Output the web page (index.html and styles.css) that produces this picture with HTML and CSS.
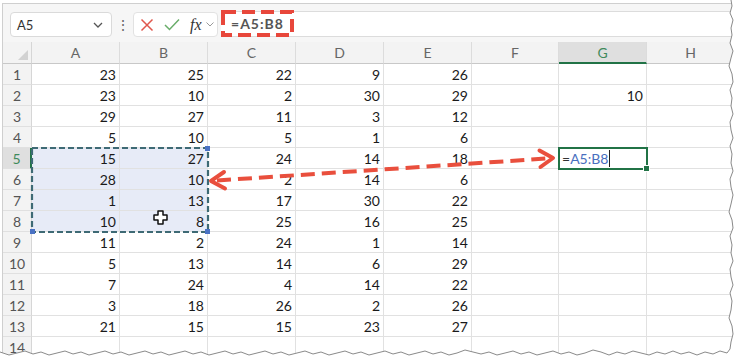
FILE: index.html
```html
<!DOCTYPE html>
<html lang="en">
<head>
    <meta charset="UTF-8">
    <title>Range reference</title>
    <link rel="stylesheet" href="styles.css">
</head>
<body>
<div class="screen">
    <div class="window">

        <!-- Formula bar -->
        <div class="toolbar">
            <div class="namebox">
                <span>A5</span>
                <svg width="10" height="6" viewBox="0 0 10 6"><path d="M1 1 L5 5 L9 1" fill="none" stroke="#555" stroke-width="1.3"/></svg>
            </div>
            <span class="dots">⋮</span>
            <div class="fxbox">
                <svg width="14" height="14" viewBox="0 0 14 14"><path d="M1.5 1.5 L12.5 12.5 M12.5 1.5 L1.5 12.5" stroke="#e0574d" stroke-width="1.5"/></svg>
                <svg width="16" height="13" viewBox="0 0 16 13"><path d="M1 7 L5.5 11.5 L15 1.5" fill="none" stroke="#69ad6a" stroke-width="1.5"/></svg>
                <span class="fx">fx</span>
                <svg width="8" height="5" viewBox="0 0 8 5"><path d="M0.5 0.5 L4 4 L7.5 0.5" fill="none" stroke="#999" stroke-width="1"/></svg>
            </div>
            <div class="formula">
                <span class="formula-ref">
                    <svg class="ref-box" width="73" height="27" viewBox="0 0 73 27"><rect x="2" y="2" width="69" height="23" fill="none" stroke="#e8473b" stroke-width="4" stroke-dasharray="13 6"/></svg>
                    =A5:B8
                </span>
            </div>
        </div>

        <!-- Worksheet -->
        <div class="sheet">
            <div class="row head">
                <div class="corner"></div>
                <div class="ch">A</div><div class="ch">B</div><div class="ch">C</div><div class="ch">D</div>
                <div class="ch">E</div><div class="ch narrow">F</div><div class="ch on">G</div><div class="ch">H</div>
            </div>
            <div class="row"><div class="rh">1</div><div class="cell">23</div><div class="cell">25</div><div class="cell">22</div><div class="cell">9</div><div class="cell">26</div><div class="cell narrow"></div><div class="cell"></div><div class="cell"></div></div>
            <div class="row"><div class="rh">2</div><div class="cell">23</div><div class="cell">10</div><div class="cell">2</div><div class="cell">30</div><div class="cell">29</div><div class="cell narrow"></div><div class="cell">10</div><div class="cell"></div></div>
            <div class="row"><div class="rh">3</div><div class="cell">29</div><div class="cell">27</div><div class="cell">11</div><div class="cell">3</div><div class="cell">12</div><div class="cell narrow"></div><div class="cell"></div><div class="cell"></div></div>
            <div class="row"><div class="rh">4</div><div class="cell">5</div><div class="cell">10</div><div class="cell">5</div><div class="cell">1</div><div class="cell">6</div><div class="cell narrow"></div><div class="cell"></div><div class="cell"></div></div>
            <div class="row"><div class="rh on">5</div><div class="cell sel">15</div><div class="cell sel">27</div><div class="cell">24</div><div class="cell">14</div><div class="cell">18</div><div class="cell narrow"></div><div class="cell"></div><div class="cell"></div></div>
            <div class="row"><div class="rh">6</div><div class="cell sel">28</div><div class="cell sel">10</div><div class="cell">2</div><div class="cell">14</div><div class="cell">6</div><div class="cell narrow"></div><div class="cell"></div><div class="cell"></div></div>
            <div class="row"><div class="rh">7</div><div class="cell sel">1</div><div class="cell sel">13</div><div class="cell">17</div><div class="cell">30</div><div class="cell">22</div><div class="cell narrow"></div><div class="cell"></div><div class="cell"></div></div>
            <div class="row"><div class="rh">8</div><div class="cell sel">10</div><div class="cell sel">8</div><div class="cell">25</div><div class="cell">16</div><div class="cell">25</div><div class="cell narrow"></div><div class="cell"></div><div class="cell"></div></div>
            <div class="row"><div class="rh">9</div><div class="cell">11</div><div class="cell">2</div><div class="cell">24</div><div class="cell">1</div><div class="cell">14</div><div class="cell narrow"></div><div class="cell"></div><div class="cell"></div></div>
            <div class="row"><div class="rh">10</div><div class="cell">5</div><div class="cell">13</div><div class="cell">14</div><div class="cell">6</div><div class="cell">29</div><div class="cell narrow"></div><div class="cell"></div><div class="cell"></div></div>
            <div class="row"><div class="rh">11</div><div class="cell">7</div><div class="cell">24</div><div class="cell">4</div><div class="cell">14</div><div class="cell">22</div><div class="cell narrow"></div><div class="cell"></div><div class="cell"></div></div>
            <div class="row"><div class="rh">12</div><div class="cell">3</div><div class="cell">18</div><div class="cell">26</div><div class="cell">2</div><div class="cell">26</div><div class="cell narrow"></div><div class="cell"></div><div class="cell"></div></div>
            <div class="row"><div class="rh">13</div><div class="cell">21</div><div class="cell">15</div><div class="cell">15</div><div class="cell">23</div><div class="cell">27</div><div class="cell narrow"></div><div class="cell"></div><div class="cell"></div></div>
            <div class="row"><div class="rh">14</div><div class="cell"></div><div class="cell"></div><div class="cell"></div><div class="cell"></div><div class="cell"></div><div class="cell narrow"></div><div class="cell"></div><div class="cell"></div></div>
        </div>
    </div>

    <!-- Copied range A5:B8 (marching ants) -->
    <svg class="selection" width="181" height="89" viewBox="0 0 181 89">
        <rect x="2" y="2" width="176" height="84" fill="none" stroke="#3e6a75" stroke-width="2.2" stroke-dasharray="6 3"/>
        <rect x="175" y="0" width="5" height="5" fill="#4a72c4"/>
        <rect x="0" y="83" width="5" height="5" fill="#4a72c4"/>
        <rect x="175" y="83" width="5" height="5" fill="#4a72c4"/>
    </svg>

    <!-- Mouse cursor -->
    <svg class="cursor" width="15" height="15" viewBox="0 0 15 15">
        <path d="M5 1 H10 V5 H14 V10 H10 V14 H5 V10 H1 V5 H5 Z" fill="#fff" stroke="#111" stroke-width="1.5" stroke-linejoin="round"/>
    </svg>

    <!-- Active cell G5 -->
    <div class="active"><span class="eq">=</span>A5:B8<span class="caret"></span></div>

    <!-- Red dashed double arrow -->
    <svg class="arrow" width="739" height="364" viewBox="0 0 739 364">
        <line x1="217" y1="180.5" x2="547" y2="158.5" stroke="#e94f3d" stroke-width="4" stroke-dasharray="14 7"/>
        <polyline points="224,172 211,180.9 225,188.5" fill="none" stroke="#e94f3d" stroke-width="4" stroke-linecap="round" stroke-linejoin="round"/>
        <polyline points="539.5,150.5 553,158 540.5,167" fill="none" stroke="#e94f3d" stroke-width="4" stroke-linecap="round" stroke-linejoin="round"/>
    </svg>

    <!-- Torn paper edge -->
    <svg class="torn" width="739" height="364" viewBox="0 0 739 364">
        <path d="M739 0 L731 0 L732 6 L730 13 L733 20 L731 28 L732 35 L730 43 L733 51 L731 58 L729 66 L732 74 L733 82 L730 90 L732 98 L731 106 L733 114 L730 122 L731 130 L733 138 L730 146 L732 154 L731 163 L733 171 L730 179 L731 187 L733 195 L731 204 L729 212 L732 220 L733 228 L730 236 L732 245 L731 253 L733 261 L730 269 L731 277 L733 285 L730 293 L732 301 L731 310 L729 318 L732 326 L733 334 L731 342 L730 349 L727 353 L720 351 L713 354 L705 352 L697 355 L689 352 L681 354 L673 351 L665 354 L657 352 L649 355 L641 353 L633 351 L625 354 L617 352 L609 355 L601 352 L593 350 L585 353 L577 355 L569 352 L561 354 L553 351 L545 353 L537 355 L529 352 L521 354 L513 351 L505 353 L497 355 L489 352 L481 354 L473 352 L465 350 L457 353 L449 355 L441 352 L433 354 L425 351 L417 353 L409 355 L401 352 L393 354 L385 351 L377 353 L369 355 L361 352 L353 354 L345 351 L337 353 L329 355 L321 352 L313 354 L305 351 L297 353 L289 355 L281 352 L273 354 L265 351 L257 353 L249 355 L241 352 L233 354 L225 351 L217 353 L209 355 L201 352 L193 354 L185 351 L177 353 L169 355 L161 352 L153 354 L145 351 L137 353 L129 355 L121 352 L113 354 L105 351 L97 353 L89 355 L81 352 L73 354 L65 351 L57 353 L49 355 L41 352 L33 354 L25 351 L17 353 L9 355 L0 352 L0 364 L739 364 Z" fill="#fff"/>
        <path d="M731 0 L732 6 L730 13 L733 20 L731 28 L732 35 L730 43 L733 51 L731 58 L729 66 L732 74 L733 82 L730 90 L732 98 L731 106 L733 114 L730 122 L731 130 L733 138 L730 146 L732 154 L731 163 L733 171 L730 179 L731 187 L733 195 L731 204 L729 212 L732 220 L733 228 L730 236 L732 245 L731 253 L733 261 L730 269 L731 277 L733 285 L730 293 L732 301 L731 310 L729 318 L732 326 L733 334 L731 342 L730 349 L727 353 L720 351 L713 354 L705 352 L697 355 L689 352 L681 354 L673 351 L665 354 L657 352 L649 355 L641 353 L633 351 L625 354 L617 352 L609 355 L601 352 L593 350 L585 353 L577 355 L569 352 L561 354 L553 351 L545 353 L537 355 L529 352 L521 354 L513 351 L505 353 L497 355 L489 352 L481 354 L473 352 L465 350 L457 353 L449 355 L441 352 L433 354 L425 351 L417 353 L409 355 L401 352 L393 354 L385 351 L377 353 L369 355 L361 352 L353 354 L345 351 L337 353 L329 355 L321 352 L313 354 L305 351 L297 353 L289 355 L281 352 L273 354 L265 351 L257 353 L249 355 L241 352 L233 354 L225 351 L217 353 L209 355 L201 352 L193 354 L185 351 L177 353 L169 355 L161 352 L153 354 L145 351 L137 353 L129 355 L121 352 L113 354 L105 351 L97 353 L89 355 L81 352 L73 354 L65 351 L57 353 L49 355 L41 352 L33 354 L25 351 L17 353 L9 355 L0 352" fill="none" stroke="#8a8a8a" stroke-width="1"/>
    </svg>
</div>
</body>
</html>
```

FILE: styles.css
```css
/* Excel screenshot with torn edges */
body {
    margin: 0;
    background: #fff;
}

.screen {
    position: relative;
    width: 739px;
    height: 364px;
    overflow: hidden;
    background: #fff;
    font-family: Lato, "Liberation Sans", sans-serif;
}

.window {
    margin: 3px 0 0 2px;
    width: 740px;
    border-top: 1px solid #cfcfcf;
    border-left: 1px solid #cfcfcf;
    background: #f6f6f6;
}

/* Formula bar */
.toolbar {
    display: flex;
    align-items: flex-start;
    height: 38px;
    padding: 8px 0 0 7px;
    box-sizing: border-box;
}

.namebox {
    width: 102px;
    height: 25px;
    box-sizing: border-box;
    display: flex;
    align-items: center;
    justify-content: space-between;
    padding: 0 8px 0 6px;
    background: #fff;
    border: 1px solid #dadada;
    border-radius: 4px;
    font-size: 13px;
    color: #333;
}

.dots {
    width: 21px;
    text-align: center;
    font-size: 14px;
    line-height: 25px;
    color: #666;
}

.fxbox {
    width: 85px;
    height: 25px;
    box-sizing: border-box;
    display: flex;
    align-items: center;
    gap: 10px;
    padding-left: 6px;
    margin-right: 3px;
    background: #fff;
    border: 1px solid #e2e2e2;
    border-radius: 4px;
}

.fx {
    font-family: "Liberation Serif", serif;
    font-style: italic;
    font-size: 16px;
    color: #333;
    margin-right: -6px;
}

.formula {
    flex: 1;
    height: 26px;
    margin-top: -1px;
    box-sizing: border-box;
    background: #fff;
    border-top: 1px solid #dcdcdc;
    border-bottom: 1px solid #dcdcdc;
}

.formula-ref {
    position: relative;
    display: inline-block;
    width: 73px;
    height: 27px;
    margin-top: -2px;
    text-align: center;
    font-size: 14px;
    font-weight: 700;
    line-height: 27px;
    letter-spacing: 1px;
    color: #555;
}

.ref-box {
    position: absolute;
    left: 0;
    top: 0;
}

/* Grid */
.row {
    display: flex;
    height: 21px;
}

.row.head {
    height: 22px;
}

.corner {
    position: relative;
    width: 29px;
    box-sizing: border-box;
    border-right: 1px solid #d6d6d6;
    border-bottom: 1px solid #c8c8c8;
    background: #f3f3f3;
}

.corner::after {
    content: "";
    position: absolute;
    right: 3px;
    bottom: 3px;
    border-left: 10px solid transparent;
    border-bottom: 10px solid #d2d2d2;
}

.ch {
    width: 88px;
    box-sizing: border-box;
    border-right: 1px solid #dcdcdc;
    border-bottom: 1px solid #c8c8c8;
    background: #f3f3f3;
    text-align: center;
    font-size: 14px;
    line-height: 22px;
    color: #666;
}

.ch.on {
    background: #dfdfdf;
    color: #3f8a5c;
    border-bottom: 2px solid #217346;
}

.rh {
    width: 29px;
    box-sizing: border-box;
    border-right: 1px solid #d6d6d6;
    border-bottom: 1px solid #e0e0e0;
    background: #f3f3f3;
    text-align: center;
    font-size: 14px;
    line-height: 21px;
    color: #555;
}

.rh.on {
    background: #dfdfdf;
    color: #3f8a5c;
    border-right: 2px solid #217346;
}

.cell {
    width: 88px;
    box-sizing: border-box;
    border-right: 1px solid #e1e1e1;
    border-bottom: 1px solid #e1e1e1;
    background: #fff;
    padding-right: 3px;
    text-align: right;
    font-size: 14px;
    line-height: 21px;
    color: #1a1a1a;
}

.narrow {
    width: 87px;
}

.cell.sel {
    background: #e7ebf7;
}

/* Overlays */
.selection {
    position: absolute;
    left: 30px;
    top: 146px;
}

.cursor {
    position: absolute;
    left: 153px;
    top: 210px;
}

.active {
    position: absolute;
    left: 558px;
    top: 147px;
    width: 90px;
    height: 23px;
    box-sizing: border-box;
    border: 2px solid #217346;
    background: #fff;
    padding-left: 2px;
    font-size: 14px;
    line-height: 19px;
    color: #4a6fc0;
}

.active::after {
    content: "";
    position: absolute;
    right: -4px;
    bottom: -4px;
    width: 5px;
    height: 5px;
    background: #217346;
    border: 1px solid #fff;
}

.eq {
    color: #333;
}

.caret {
    display: inline-block;
    width: 1px;
    height: 17px;
    margin-left: 1px;
    vertical-align: -3px;
    background: #222;
}

.arrow,
.torn {
    position: absolute;
    left: 0;
    top: 0;
    pointer-events: none;
}
```
